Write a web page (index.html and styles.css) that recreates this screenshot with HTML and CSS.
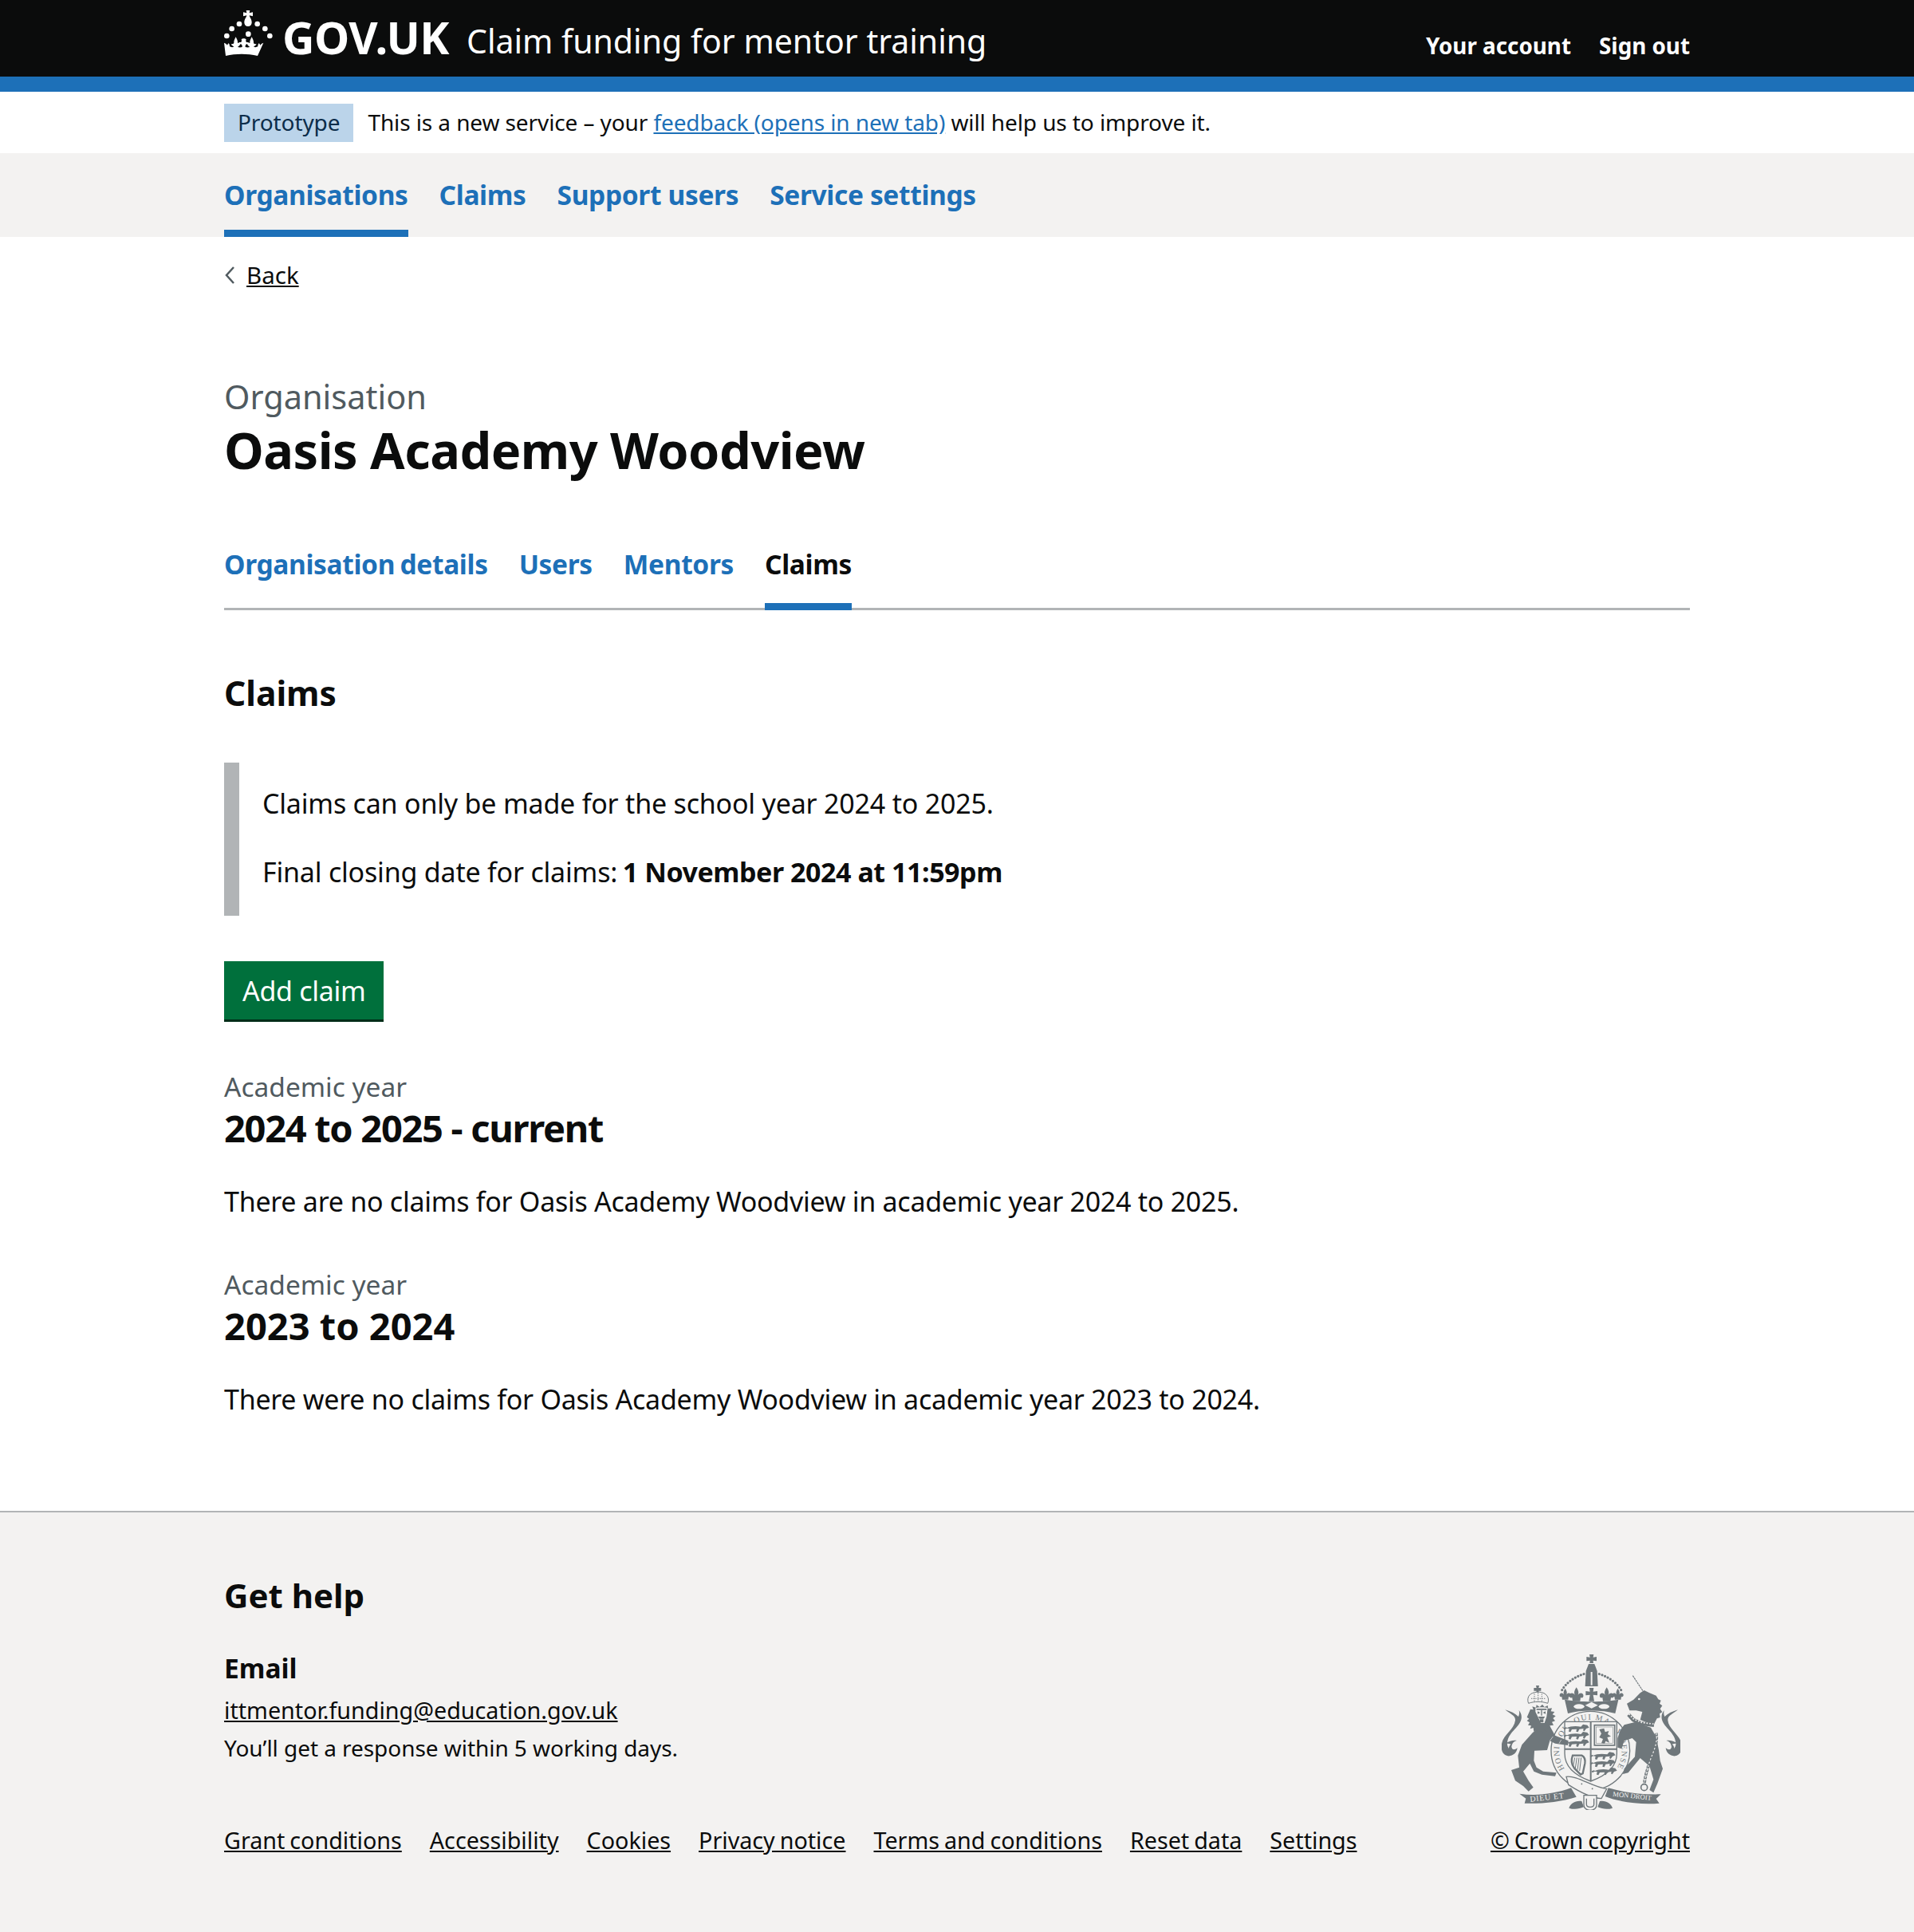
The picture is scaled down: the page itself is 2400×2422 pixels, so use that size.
FILE: index.html
```html
<!DOCTYPE html>
<html lang="en">
<head>
<meta charset="utf-8">
<title>Oasis Academy Woodview - Claims</title>
<link rel="stylesheet" href="styles.css">
</head>
<body>
<header class="header">
  <div class="wrap header-row">
    <div class="brand">
      <svg class="crown" viewBox="18 24 183 171" aria-hidden="true">
        <g fill="#fff">
          <path d="M101 24h14l-2 10 13-3v15l-13-3c1 8 9 14 9 26 0 9-6 15-14 15s-14-6-14-15c0-12 8-18 9-26l-13 3V31l13 3z"/>
          <circle cx="75" cy="75" r="10"/><circle cx="143" cy="75" r="10"/>
          <circle cx="47" cy="93" r="10"/><circle cx="172" cy="93" r="10"/>
          <circle cx="28" cy="120" r="10"/><circle cx="190" cy="120" r="10"/>
          <circle cx="109" cy="113" r="10"/>
          <path d="M18 146c8 3 10 6 12 9 2-4 3-7 5-7 3 3 4 6 4 12 5 3 11 3 16 1-3-3-8-4-11-10 5 0 9-1 11-4-1-8 3-15 7-23 4 8 8 15 7 23 2 3 5 4 10 4-2 6-7 8-10 11 6 2 12 2 17 0 1-5-1-9-5-11-5 1-9-1-12-3 3-3 7-5 12-4 3-1 4-5 2-11 3-2 5-3 9-3 4 0 6 1 9 3-2 6-1 10 2 11 5-1 9 1 12 4-3 2-7 4-12 3-4 2-6 6-5 11 5 2 11 2 17 0-3-3-8-5-10-11 5 0 8-1 10-4-1-8 3-15 7-23 4 8 8 15 7 23 2 3 6 4 11 4-3 6-8 7-11 10 5 2 11 2 16-1 0-6 1-9 4-12 2 0 3 3 5 7 2-3 4-6 12-9l-22 49c-20-5-40-7-60-7s-40 2-60 7z"/>
        </g>
      </svg>
      <span class="logotype">GOV.UK</span>
      <a class="service-name" href="#">Claim funding for mentor training</a>
    </div>
    <nav class="account">
      <a href="#">Your account</a>
      <a href="#">Sign out</a>
    </nav>
  </div>
</header>
<div class="header-rule"></div>
<div class="phase wrap">
  <strong class="tag">Prototype</strong>
  <span>This is a new service – your <a href="#" class="link">feedback (opens in new tab)</a> will help us to improve it.</span>
</div>
<nav class="primary">
  <div class="wrap primary-row">
    <a href="#" class="primary-item active">Organisations</a>
    <a href="#" class="primary-item">Claims</a>
    <a href="#" class="primary-item">Support users</a>
    <a href="#" class="primary-item">Service settings</a>
  </div>
</nav>
<div class="wrap">
  <a href="#" class="back"><svg class="chev" viewBox="0 0 14 24"><path d="M12 2 3 12l9 10" fill="none" stroke="#505a5f" stroke-width="2.500"/></svg><span>Back</span></a>
  <main class="main">
    <span class="caption-l">Organisation</span>
    <h1 class="title">Oasis Academy Woodview</h1>
    <nav class="sub">
      <a href="#" class="sub-item">Organisation details</a>
      <a href="#" class="sub-item">Users</a>
      <a href="#" class="sub-item">Mentors</a>
      <a href="#" class="sub-item current">Claims</a>
    </nav>
    <h2 class="section-title">Claims</h2>
    <div class="inset">
      <p>Claims can only be made for the school year 2024 to 2025.</p>
      <p>Final closing date for claims: <strong>1 November 2024 at 11:59pm</strong></p>
    </div>
    <a href="#" class="button">Add claim</a>
    <section class="year">
      <span class="caption-m">Academic year</span>
      <h2 class="year-title year-title-long">2024 to 2025 - current</h2>
      <p class="body">There are no claims for Oasis Academy Woodview in academic year 2024 to 2025.</p>
    </section>
    <section class="year">
      <span class="caption-m">Academic year</span>
      <h2 class="year-title">2023 to 2024</h2>
      <p class="body">There were no claims for Oasis Academy Woodview in academic year 2023 to 2024.</p>
    </section>
  </main>
</div>
<footer class="footer">
  <div class="wrap">
    <h2 class="help-title">Get help</h2>
    <div class="footer-grid">
      <div class="footer-left">
        <h3 class="email-title">Email</h3>
        <a href="#" class="foot-link email">ittmentor.funding@education.gov.uk</a>
        <p class="resp">You’ll get a response within 5 working days.</p>
        <ul class="foot-links">
          <li><a href="#" class="foot-link">Grant conditions</a></li>
          <li><a href="#" class="foot-link">Accessibility</a></li>
          <li><a href="#" class="foot-link">Cookies</a></li>
          <li><a href="#" class="foot-link">Privacy notice</a></li>
          <li><a href="#" class="foot-link">Terms and conditions</a></li>
          <li><a href="#" class="foot-link">Reset data</a></li>
          <li><a href="#" class="foot-link">Settings</a></li>
        </ul>
      </div>
      <div class="footer-right">
        <svg class="arms" viewBox="70 70 670 585" aria-hidden="true">
          <defs>
            <path id="passant" d="M0 10c10-6 34-8 52-4l8-9 16 3 7 9-11 4-7 10-5-3 2-7-16 2-5 11-7-2 2-9-18 1-5 10-7-2 2-11-9-1-9 5-3-6 9-3z"/>
            <path id="fleur" d="M0-32C8-20 10-12 6-4c6-8 16-10 20 0 2 8-4 14-10 10L14 20h-28L-16 6c-6 4-12-2-10-10C-22-14-12-12-6-4-10-12-8-20 0-32z"/>
            <path id="pattee" d="M-8-30H8L6-16l16-2V-2L6-4l4 24h-20l4-24-16 2v-16l16 2z"/>
            <path id="ringpath" d="M306 500A118 118 0 1 1 500 500" fill="none"/>
            <path id="tail" d="M0 0c20 6 38 14 50 26 4-8 4-16 2-24 8 10 12 22 8 36-8 30-50 48-52 88-1 8 2 14 6 20 0-6 2-12 8-16-8-2-14-4-20-2 12-10 28-14 42-12-14 4-18 12-20 24 2 10 10 14 22 4-2 18-18 32-36 30C-10 170-18 150-12 124c6-30 46-50 50-84 2-18-20-24-38-40z"/>
          </defs>
          <!-- garter -->
          <circle cx="403" cy="432" r="148" fill="none" stroke="#6f777b" stroke-width="4"/>
          <text class="arms-ring"><textPath href="#ringpath" textLength="506">HONI SOIT QUI MAL Y PENSE</textPath></text>
          <!-- shield -->
          <path d="M306 323h196v120c0 50-42 84-98 104-56-20-98-54-98-104z" fill="#f3f2f1" stroke="#6f777b" stroke-width="4"/>
          <path d="M401 323h6v224h-6zM306 423h196v6H306z" fill="#6f777b"/>
          <g fill="#6f777b">
            <use href="#passant" x="315" y="336"/><use href="#passant" x="315" y="364"/><use href="#passant" x="315" y="392"/>
            <use href="#passant" x="414" y="440"/><use href="#passant" x="414" y="468"/><use href="#passant" x="420" y="498"/>
            <path d="M436 352l18-4 4 14 14-4-4 12 12 8-14 4 8 20-14-6-4 10-12-2 6-16-14-6 8-14z"/>
          </g>
          <rect x="418" y="336" width="76" height="76" fill="none" stroke="#6f777b" stroke-width="5"/>
          <rect x="425" y="343" width="62" height="62" fill="none" stroke="#6f777b" stroke-width="1.500"/>
          <path d="M336 450h34c12 6 14 16 12 30l-8 38-8 4-24-24c-12-16-12-32-6-48z" fill="#f3f2f1" stroke="#6f777b" stroke-width="7"/>
          <path d="M344 458l-6 30M352 458l-6 40M360 458l-6 46M368 458l-6 50" stroke="#6f777b" stroke-width="3" fill="none"/>
          <!-- royal crown -->
          <g fill="#6f777b">
            <path d="M399 70h16l-2 11 13-2v16l-13-2 1 10h-14l1-10-13 2V79l13 2z"/>
            <path d="M396 106h22l10 26 3 58h-48l3-58z"/>
            <use href="#fleur" x="350" y="226"/><use href="#pattee" x="407" y="226"/><use href="#fleur" x="464" y="226"/>
            <use href="#fleur" transform="translate(308 224) scale(.8)"/><use href="#fleur" transform="translate(506 224) scale(.8)"/>
            <path d="M306 240c50 10 152 10 202 0l-12 52c-50-14-128-14-178 0z"/>
          </g>
          <path d="M296 204c16-28 50-52 88-62M518 204c-16-28-50-52-88-62" fill="none" stroke="#6f777b" stroke-width="9" stroke-linecap="round" stroke-dasharray="0.500 11"/>
          <path d="M404 136h6v50h-6z" fill="#f3f2f1"/>
          <g fill="#f3f2f1">
            <ellipse cx="360" cy="266" rx="20" ry="9"/><path d="M407 249l24 12-24 12-24-12z"/><ellipse cx="454" cy="266" rx="20" ry="9"/>
          </g>
          <!-- lion -->
          <g fill="#6f777b">
            <path d="M245 330l25 45 50 20-2 17-48-7-20-10-10 35-48 2-2 38 10 25 25 15 50 5-5 13-50-6-30-12-15-30-25 30 20 35 18 25-18 15-20-20-30-20-15-40 30-10-5-45 15-40 40-45 30-25z"/>
            <path d="M177 276l11 2-4-12 14 4 2-10 12 8 10-10 8 10 12-6 2 12 14-2-4 12 14 2-8 10 12 6-10 8 8 10-12 4 6 12-14 2 2 12-12-2v12l-12-6-6 12-8-8-10 8-2-12-12 6-2-14-12 4 4-12-12-2 6-10-10-6 8-8-8-6z"/>
            <path d="M190 196h10l-2-9h12l-2 9h9v11h-9l2 9h-12l2-9h-10z"/>
          </g>
          <path d="M196 272c8-4 38-4 46 0l-4 32-8 24h-14l-10-22-10-20z" fill="#f3f2f1"/>
          <path d="M204 284l10 5-10 5zM234 284l-10 5 10 5zM206 304h26l-6 8h-14zM212 314h14v12h-14zM200 274h38v5h-38zM217 280h4v20h-4z" fill="#6f777b"/>
          <path d="M170 254c-6-14-2-32 14-38 12-6 32-6 44 0 16 8 20 24 14 38-22-8-50-8-72 0z" fill="#f3f2f1" stroke="#6f777b" stroke-width="3"/>
          <path d="M180 236h52M192 218v32M206 214v34M220 218v32" stroke="#6f777b" stroke-width="3" stroke-dasharray="4 4" fill="none"/>
          <use href="#tail" x="82" y="278" fill="#6f777b"/>
          <path d="M250 395l12-16M285 405l8-14" stroke="#f3f2f1" stroke-width="2" fill="none"/>
          <!-- unicorn -->
          <g fill="#6f777b">
            <path d="M530 335l40-10 60 20 20 35 10 50 5 40 10 30-20 55-15 35-15-10 15-40-15-50-35-30-45 55-20 5 5-20 40-45 5-55-15-15-30 10-10 30-15-5v-35l10-30z"/>
            <path d="M540 255l25-15 25-25 15-10 20 10 25 10 8 14 10 4-5 12 10 8-8 12 8 12-10 6 2 14-12 4-13 25-50-20 8-30-23-5-25 0z"/>
          </g>
          <circle cx="586" cy="238" r="4" fill="#f3f2f1"/>
          <path d="M562 150l40 60" stroke="#6f777b" stroke-width="3.500" fill="none" stroke-dasharray="8 2"/>
          <path d="M546 296l18 20 30 14 48 6" stroke="#6f777b" stroke-width="14" fill="none"/>
          <path d="M548 294l18 20 30 12 46 6" stroke="#f3f2f1" stroke-width="5" stroke-dasharray="5 6" fill="none"/>
          <path d="M650 366c8 40-14 76-26 112-8 30-18 56-18 84" stroke="#6f777b" stroke-width="11" stroke-dasharray="11 3" fill="none"/>
          <path d="M650 366c8 40-14 76-26 112-8 30-18 56-18 84" stroke="#f3f2f1" stroke-width="3.500" stroke-dasharray="7 7" fill="none"/>
          <circle cx="605" cy="570" r="12" fill="#f3f2f1" stroke="#6f777b" stroke-width="5"/>
          <use href="#tail" transform="translate(732 278) scale(-1 1)" fill="#6f777b"/>
          <!-- motto -->
          <g fill="#6f777b">
            <path d="M136 594c64 10 134 0 194-22l20 34c-60 19-130 26-195 24l5-18z"/>
            <path d="M470 572c60 18 130 26 198 24l-18 17 12 17c-72 6-152-5-204-26z"/>
            <path d="M322 648c6-18 26-30 48-26l8 22c-18 8-38 10-56 4zM486 648c-6-18-26-30-48-26l-8 22c18 8 38 10 56 4z"/>
          </g>
          <text class="arms-motto" transform="translate(176 624) rotate(-6)">DIEU ET</text>
          <text class="arms-motto arms-motto-right" transform="translate(486 603) rotate(6)">MON DROIT</text>
          <path d="M312 530c40-6 100 40 152 46l-20 36c-40-2-90-30-124-52z" fill="#f3f2f1" stroke="#6f777b" stroke-width="4"/>
          <path d="M368 556l4 2M408 574l4 2" stroke="#6f777b" stroke-width="5" fill="none"/>
          <path d="M378 600h48v36c0 12-10 20-24 20s-24-8-24-20z" fill="#f3f2f1" stroke="#6f777b" stroke-width="4"/>
          <path d="M388 612v22c0 6 6 10 14 10s14-4 14-10v-22" fill="none" stroke="#6f777b" stroke-width="4"/>
        </svg>
        <a href="#" class="foot-link copyright">© Crown copyright</a>
      </div>
    </div>
  </div>
</footer>
</body>
</html>
```
FILE: styles.css
```css
* { box-sizing: border-box; }
html, body { margin: 0; padding: 0; }
body { font-family: "Noto Sans", "Open Sans", sans-serif; color: #0b0c0c; font-size: 30px; background: #fff; }
a { color: inherit; }
p, h1, h2, h3, ul { margin: 0; padding: 0; }
.wrap { width: 1838px; margin: 0 auto; }

.header { background: #0b0c0c; height: 96px; color: #fff; }
.header-row { display: flex; justify-content: space-between; height: 96px; }
.brand { display: flex; align-items: flex-start; padding-top: 13px; }
.crown { width: 61px; height: 57px; }
.logotype { font-size: 56px; font-weight: 700; line-height: 70px; margin-left: 12px; margin-top: -2px; letter-spacing: -0.5px; }
.service-name { font-size: 41px; line-height: 60px; margin: 8px 0 0 22px; text-decoration: none; color: #fff; }
.account { display: flex; gap: 35px; padding-top: 37px; }
.account a { font-size: 27.8px; font-weight: 700; color: #fff; text-decoration: none; line-height: 40px; }
.header-rule { height: 19px; background: #1d70b8; }

.phase { display: flex; align-items: center; height: 77px; gap: 18px; font-size: 28px; letter-spacing: -0.1px; }
.phase span { position: relative; top: -1px; }
.tag { background: #bbd4ea; color: #0c2d4a; font-weight: 400; padding: 0 17px; height: 48px; line-height: 46px; font-size: 28px; }
.link { color: #1d70b8; }

.primary { background: #f3f2f1; height: 105px; }
.primary-row { display: flex; gap: 39px; height: 105px; }
.primary-item { font-size: 33.5px; font-weight: 700; letter-spacing: -0.35px; color: #1d70b8; text-decoration: none; line-height: 50px; padding-top: 27px; height: 105px; }
.primary-item.active { border-bottom: 9px solid #1d70b8; }

.back { display: inline-flex; align-items: center; gap: 14px; margin-top: 28px; font-size: 29.5px; line-height: 40px; }
.chev { width: 14px; height: 24px; }
.main { display: block; }
.caption-l { display: block; font-size: 41.5px; color: #505a5f; line-height: 56px; margin-top: 103px; }
.title { font-size: 63px; font-weight: 700; line-height: 80px; letter-spacing: -0.5px; margin-top: -1px; }
.sub { display: flex; gap: 39px; border-bottom: 3px solid #b1b4b6; margin-top: 71px; height: 90px; }
.sub-item { font-size: 33.5px; font-weight: 700; letter-spacing: -0.35px; word-spacing: -2px; color: #1d70b8; text-decoration: none; line-height: 50px; height: 90px; padding-top: 7px; }
.sub-item.current { color: #0b0c0c; border-bottom: 9px solid #1d70b8; }
.section-title { font-size: 42.5px; font-weight: 700; line-height: 60px; margin-top: 74px; }
.inset { border-left: 19px solid #b1b4b6; margin-top: 57px; padding: 26px 0 18px 29px; height: 192px; font-size: 34px; line-height: 50px; letter-spacing: -0.2px; }
.inset strong { letter-spacing: -0.45px; margin-left: -2px; }
.inset p + p { margin-top: 36px; }
.button { display: inline-block; background: #00703c; color: #fff; font-size: 34px; line-height: 50px; padding: 12px 23px 11px; border-bottom: 3px solid #002d18; text-decoration: none; margin-top: 57px; letter-spacing: -0.3px; }
.year { margin-top: 59px; }
.year + .year { margin-top: 57px; }
.caption-m { display: block; font-size: 33.5px; color: #505a5f; line-height: 44px; }
.year-title { font-size: 47px; font-weight: 700; line-height: 60px; }
.year-title-long { letter-spacing: -1.3px; }
.body { font-size: 34px; line-height: 50px; margin-top: 37px; letter-spacing: -0.27px; }

.footer { margin-top: 115px; background: #f3f2f1; border-top: 2px solid #b1b4b6; height: 529px; padding-top: 74px; }
.help-title { font-size: 42px; font-weight: 700; line-height: 60px; }
.footer-grid { display: flex; justify-content: space-between; align-items: flex-end; }
.footer-left { flex: 1; }
.email-title { font-size: 33.5px; font-weight: 700; line-height: 50px; margin-top: 36px; }
.foot-link { font-size: 28.7px; line-height: 40px; word-spacing: -1.5px; }
.email { display: block; margin-top: 6px; line-height: 44px; }
.resp { font-size: 28px; line-height: 44px; margin-top: 3px; letter-spacing: -0.05px; }
.foot-links { list-style: none; display: flex; gap: 35px; margin-top: 73px; }
.footer-right { display: flex; flex-direction: column; align-items: flex-end; }
.arms { width: 224px; height: 195px; margin-right: 12px; }
.arms-motto { font-family: "Liberation Serif", serif; font-size: 30px; letter-spacing: 2px; fill: #f3f2f1; }
.arms-motto-right { font-size: 26px; letter-spacing: 0; }
.arms-ring { font-family: "Liberation Serif", serif; font-size: 30px; fill: #6f777b; }
.copyright { margin-top: 18px; }
```
